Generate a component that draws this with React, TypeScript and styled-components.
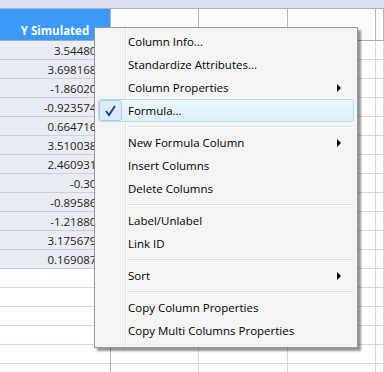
import React from "react"
import styled, { createGlobalStyle } from "styled-components"

const values = [
    "3.544802", "3.6981683", "-1.860209", "-0.9235746", "0.6647163", "3.5100384",
    "2.4609316", "-0.307", "-0.895866", "-1.218802", "3.1756792", "0.1690874",
]

type Entry =
    | { kind: "item"; label: string; sub?: boolean; checked?: boolean }
    | { kind: "sep" }

const menu: Entry[] = [
    { kind: "item", label: "Column Info..." },
    { kind: "item", label: "Standardize Attributes..." },
    { kind: "item", label: "Column Properties", sub: true },
    { kind: "item", label: "Formula...", checked: true },
    { kind: "sep" },
    { kind: "item", label: "New Formula Column", sub: true },
    { kind: "item", label: "Insert Columns" },
    { kind: "item", label: "Delete Columns" },
    { kind: "sep" },
    { kind: "item", label: "Label/Unlabel" },
    { kind: "item", label: "Link ID" },
    { kind: "sep" },
    { kind: "item", label: "Sort", sub: true },
    { kind: "sep" },
    { kind: "item", label: "Copy Column Properties" },
    { kind: "item", label: "Copy Multi Columns Properties" },
]

const Check = () => (
    <svg width="13" height="13" viewBox="0 0 13 13">
        <path d="M2 7 L5 11 L11 2" fill="none" stroke="#21409a" strokeWidth="2" />
    </svg>
)

export default function App() {
    const rows = Array.from({ length: 18 }, (_, i) => values[i])
    return (
        <>
            <GlobalStyle />
            <Screen>
                <TopBar />
                <Row>
                    <HeaderCell $active>Y Simulated</HeaderCell>
                    <HeaderCell />
                    <HeaderCell />
                    <HeaderCell />
                    <HeaderCell />
                </Row>
                {rows.map((v, i) => (
                    <Row key={i}>
                        <DataCell $filled={v !== undefined}>{v}</DataCell>
                        <GridCell />
                        <GridCell />
                        <GridCell />
                        <GridCell />
                    </Row>
                ))}
                <Menu>
                    {menu.map((e, i) =>
                        e.kind === "sep" ? (
                            <Separator key={i} />
                        ) : (
                            <Item key={i} $checked={e.checked}>
                                <Gutter>{e.checked && <CheckBox><Check /></CheckBox>}</Gutter>
                                <Label>{e.label}</Label>
                                {e.sub && <Arrow />}
                            </Item>
                        )
                    )}
                </Menu>
            </Screen>
        </>
    )
}

const GlobalStyle = createGlobalStyle`
    html, body {
        margin: 0;
        padding: 0;
        background: #ffffff;
    }
    body {
        font-family: "Open Sans", "Noto Sans", sans-serif;
        font-size: 11.5px;
    }
`

const Screen = styled.div`
    position: relative;
    width: 384px;
    height: 372px;
    overflow: hidden;
    background: #ffffff;
`

const TopBar = styled.div`
    height: 8px;
    background: #dcdff2;
    border-bottom: 1px solid #aeb2c6;
`

const Row = styled.div`
    display: grid;
    grid-template-columns: 111px 88px 89px 88px 1fr;
`

const HeaderCell = styled.div<{ $active?: boolean }>`
    box-sizing: border-box;
    height: 32px;
    display: flex;
    align-items: flex-end;
    justify-content: center;
    padding-bottom: 2px;

    border-right: 1px solid #b4b4b4;
    border-bottom: 1px solid #a9a9a9;
    background: ${p => (p.$active ? "#3b9af7" : "#fbfbfb")};

    color: #ffffff;
    font-weight: bold;
    font-size: 11.5px;
`

const GridCell = styled.div`
    box-sizing: border-box;
    height: 19px;
    border-right: 1px solid #d6d6e4;
    border-bottom: 1px solid #d6d6e4;
`

const DataCell = styled(GridCell)<{ $filled: boolean }>`
    display: flex;
    align-items: center;
    justify-content: flex-end;
    padding-right: 7px;

    background: ${p => (p.$filled ? "#e9ecf3" : "#ffffff")};
    border-right-color: #b4b4b4;
    border-bottom-color: ${p => (p.$filled ? "#c9cfdc" : "#d6d6e4")};

    color: #1c1c1c;
    font-size: 11.5px;
    white-space: nowrap;
`

const Menu = styled.div`
    position: absolute;
    left: 94px;
    top: 27px;
    width: 264px;
    box-sizing: border-box;
    padding: 2px 0 5px;

    background: #f4f4f4;
    border: 1px solid #979797;
    box-shadow: 3px 3px 2px rgba(0, 0, 0, 0.42);

    &::before {
        content: "";
        position: absolute;
        left: 30px;
        top: 0;
        bottom: 0;
        width: 1px;
        background: #e2e3e3;
        border-right: 1px solid #ffffff;
    }
`

const Item = styled.div<{ $checked?: boolean }>`
    position: relative;
    display: flex;
    align-items: center;
    height: 23px;
    margin: 0 3px;

    border: 1px solid ${p => (p.$checked ? "#b4dcef" : "transparent")};
    border-radius: 3px;
    box-sizing: border-box;
    background: ${p => (p.$checked ? "linear-gradient(#eef7fd, #dfeff9)" : "transparent")};

    color: #000000;
    font-size: 11.5px;
`

const Gutter = styled.div`
    width: 29px;
    height: 100%;
    display: flex;
    align-items: center;
    padding-left: 0;
`

const CheckBox = styled.div`
    width: 21px;
    height: 19px;
    display: flex;
    align-items: center;
    justify-content: center;
    border: 1px solid #a9cde6;
    border-radius: 3px;
    background: #dcebf8;
`

const Label = styled.span`
    flex: 1;
    white-space: nowrap;
`

const Arrow = styled.span`
    width: 0;
    height: 0;
    margin-right: 12px;
    border-top: 4px solid transparent;
    border-bottom: 4px solid transparent;
    border-left: 4px solid #000000;
`

const Separator = styled.div`
    height: 1px;
    margin: 4px 3px 3px 33px;
    background: #e0e0e0;
    border-bottom: 1px solid #ffffff;
`
